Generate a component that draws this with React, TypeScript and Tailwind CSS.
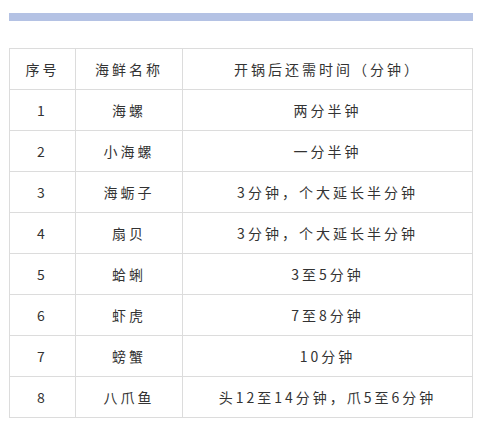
const rows: [string, string, string][] = [
  ["1", "海螺", "两分半钟"],
  ["2", "小海螺", "一分半钟"],
  ["3", "海蛎子", "3分钟，个大延长半分钟"],
  ["4", "扇贝", "3分钟，个大延长半分钟"],
  ["5", "蛤蜊", "3至5分钟"],
  ["6", "虾虎", "7至8分钟"],
  ["7", "螃蟹", "10分钟"],
  ["8", "八爪鱼", "头12至14分钟，爪5至6分钟"],
];

export default function App() {
  return (
    <div
      className="w-[482px] h-[431px] bg-white px-[9px] pt-[13px] text-[#333]"
      style={{ fontFamily: '"Noto Sans CJK SC", "Noto Sans", sans-serif' }}
    >
      <div className="h-[8px] w-[464px] bg-[#b4c2e4]" />
      <table className="mt-[27px] w-[464px] border-collapse text-[14px] tracking-[3px]">
        <colgroup>
          <col className="w-[66px]" />
          <col className="w-[107px]" />
          <col />
        </colgroup>
        <thead>
          <tr className="h-[41px]">
            <th className="border border-[#dcdcdc] font-normal">序号</th>
            <th className="border border-[#dcdcdc] font-normal">海鲜名称</th>
            <th className="border border-[#dcdcdc] font-normal">开锅后还需时间（分钟）</th>
          </tr>
        </thead>
        <tbody>
          {rows.map((r) => (
            <tr key={r[0]} className="h-[41px]">
              <td className="border border-[#dcdcdc] text-center">{r[0]}</td>
              <td className="border border-[#dcdcdc] text-center">{r[1]}</td>
              <td className="border border-[#dcdcdc] text-center">{r[2]}</td>
            </tr>
          ))}
        </tbody>
      </table>
    </div>
  );
}
